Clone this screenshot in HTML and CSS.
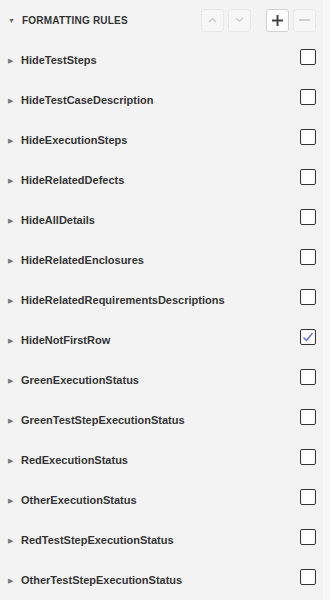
FILE: index.html
```html
<!DOCTYPE html>
<html lang="en">
<head>
    <meta charset="UTF-8">
    <title>Formatting Rules</title>
    <link rel="stylesheet" href="styles.css">
</head>
<body>
    <div class="panel">
        <!-- Header -->
        <div class="header">
            <span class="caret-down">&#9660;</span>
            <span class="title">FORMATTING RULES</span>
            <div class="tools">
                <button class="tool off">
                    <svg width="9" height="6" viewBox="0 0 9 6"><path d="M1 5 L4.5 1.5 L8 5" fill="none" stroke="#c8c8c8" stroke-width="1.2"/></svg>
                </button>
                <button class="tool off">
                    <svg width="9" height="6" viewBox="0 0 9 6"><path d="M1 1 L4.5 4.5 L8 1" fill="none" stroke="#c8c8c8" stroke-width="1.2"/></svg>
                </button>
                <button class="tool on gap">
                    <svg width="11" height="11" viewBox="0 0 11 11"><path d="M5.5 0 V11 M0 5.5 H11" stroke="#444" stroke-width="2"/></svg>
                </button>
                <button class="tool off">
                    <svg width="11" height="2" viewBox="0 0 11 2"><path d="M0 1 H11" stroke="#d0d0d0" stroke-width="2"/></svg>
                </button>
            </div>
        </div>

        <!-- Rules -->
        <div class="rule"><span class="caret">&#9654;</span><span class="name">HideTestSteps</span><span class="check"></span></div>
        <div class="rule"><span class="caret">&#9654;</span><span class="name">HideTestCaseDescription</span><span class="check"></span></div>
        <div class="rule"><span class="caret">&#9654;</span><span class="name">HideExecutionSteps</span><span class="check"></span></div>
        <div class="rule"><span class="caret">&#9654;</span><span class="name">HideRelatedDefects</span><span class="check"></span></div>
        <div class="rule"><span class="caret">&#9654;</span><span class="name">HideAllDetails</span><span class="check"></span></div>
        <div class="rule"><span class="caret">&#9654;</span><span class="name">HideRelatedEnclosures</span><span class="check"></span></div>
        <div class="rule"><span class="caret">&#9654;</span><span class="name">HideRelatedRequirementsDescriptions</span><span class="check"></span></div>
        <div class="rule"><span class="caret">&#9654;</span><span class="name">HideNotFirstRow</span>
            <span class="check">
                <svg width="14" height="14" viewBox="0 0 14 14"><path d="M2.5 7.5 L5.5 10.5 L11.5 3" fill="none" stroke="#5b6fd6" stroke-width="1.4"/></svg>
            </span>
        </div>
        <div class="rule"><span class="caret">&#9654;</span><span class="name">GreenExecutionStatus</span><span class="check"></span></div>
        <div class="rule"><span class="caret">&#9654;</span><span class="name">GreenTestStepExecutionStatus</span><span class="check"></span></div>
        <div class="rule"><span class="caret">&#9654;</span><span class="name">RedExecutionStatus</span><span class="check"></span></div>
        <div class="rule"><span class="caret">&#9654;</span><span class="name">OtherExecutionStatus</span><span class="check"></span></div>
        <div class="rule"><span class="caret">&#9654;</span><span class="name">RedTestStepExecutionStatus</span><span class="check"></span></div>
        <div class="rule"><span class="caret">&#9654;</span><span class="name">OtherTestStepExecutionStatus</span><span class="check"></span></div>
    </div>
</body>
</html>
```

FILE: styles.css
```css
/* General */
body {
    margin: 0;
    background: #f7f7f7;
    font-family: "Liberation Sans", Arial, sans-serif;
    color: #333;
    overflow: hidden;
}

.panel {
    width: 323px;
    height: 600px;
    background: #f3f3f3;
}

/* Header */
.header {
    display: flex;
    align-items: center;
    height: 40px;
    padding-left: 8px;
}
.caret-down {
    font-size: 7px;
    color: #666;
    width: 14px;
}
.title {
    font-size: 10px;
    font-weight: bold;
    letter-spacing: 0.2px;
    color: #333;
}
.tools {
    display: flex;
    gap: 4px;
    margin-left: auto;
    margin-right: 7px;
}
.tool {
    width: 23px;
    height: 23px;
    padding: 0;
    display: flex;
    align-items: center;
    justify-content: center;
    border-radius: 3px;
    border: 1px solid #e8e8e8;
    background: #f6f6f6;
}
.tool.on {
    background: #fff;
    border-color: #d2d2d2;
}
.tool.gap {
    margin-left: 11px;
}

/* Rules */
.rule {
    display: flex;
    align-items: center;
    height: 40px;
    padding-left: 8px;
}
.caret {
    font-size: 7px;
    color: #777;
    width: 13px;
    padding-top: 1px;
}
.name {
    font-size: 11px;
    font-weight: bold;
    color: #333;
}
.check {
    margin-left: auto;
    margin-right: 7px;
    margin-bottom: 7px;
    width: 14px;
    height: 14px;
    border: 1px solid #333;
    border-radius: 2px;
    background: #fff;
    display: flex;
}
```
